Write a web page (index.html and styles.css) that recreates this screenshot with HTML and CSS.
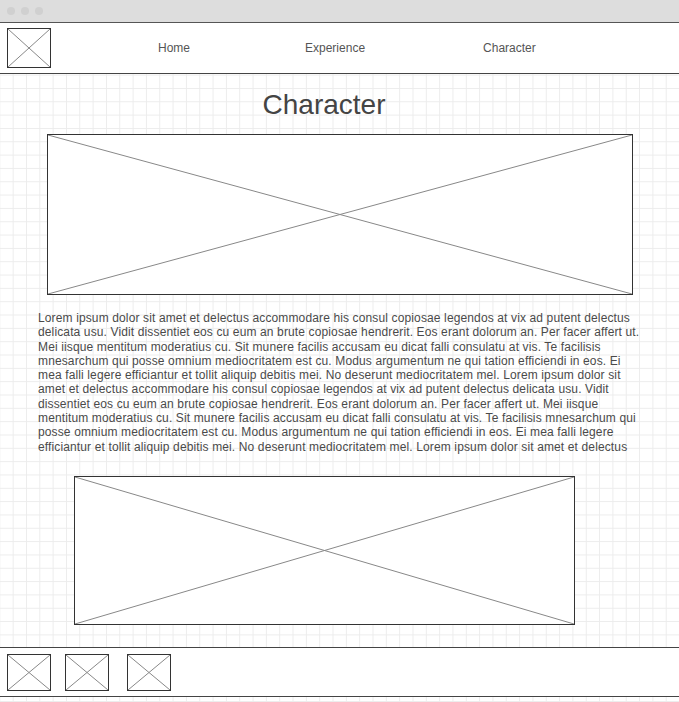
FILE: index.html
```html
<!DOCTYPE html>
<html lang="en">
<head>
    <meta charset="UTF-8">
    <meta name="viewport" content="width=device-width, initial-scale=1.0">
    <title>Character</title>
    <link rel="stylesheet" href="styles.css">
</head>
<body>
    <div class="titlebar">
        <span class="dot"></span>
        <span class="dot"></span>
        <span class="dot"></span>
    </div>

    <nav class="nav">
        <div class="placeholder logo">
            <svg viewBox="0 0 100 100" preserveAspectRatio="none"><line x1="0" y1="0" x2="100" y2="100"/><line x1="100" y1="0" x2="0" y2="100"/></svg>
        </div>
        <ul class="nav-links">
            <li>Home</li>
            <li>Experience</li>
            <li>Character</li>
        </ul>
    </nav>

    <main class="content">
        <h1>Character</h1>

        <div class="placeholder hero">
            <svg viewBox="0 0 100 100" preserveAspectRatio="none"><line x1="0" y1="0" x2="100" y2="100"/><line x1="100" y1="0" x2="0" y2="100"/></svg>
        </div>

        <p class="body-text">Lorem ipsum dolor sit amet et delectus accommodare his consul copiosae legendos at vix ad putent delectus delicata usu. Vidit dissentiet eos cu eum an brute copiosae hendrerit. Eos erant dolorum an. Per facer affert ut. Mei iisque mentitum moderatius cu. Sit munere facilis accusam eu dicat falli consulatu at vis. Te facilisis mnesarchum qui posse omnium mediocritatem est cu. Modus argumentum ne qui tation efficiendi in eos. Ei mea falli legere efficiantur et tollit aliquip debitis mei. No deserunt mediocritatem mel. Lorem ipsum dolor sit amet et delectus accommodare his consul copiosae legendos at vix ad putent delectus delicata usu. Vidit dissentiet eos cu eum an brute copiosae hendrerit. Eos erant dolorum an. Per facer affert ut. Mei iisque mentitum moderatius cu. Sit munere facilis accusam eu dicat falli consulatu at vis. Te facilisis mnesarchum qui posse omnium mediocritatem est cu. Modus argumentum ne qui tation efficiendi in eos. Ei mea falli legere efficiantur et tollit aliquip debitis mei. No deserunt mediocritatem mel. Lorem ipsum dolor sit amet et delectus</p>

        <div class="placeholder second">
            <svg viewBox="0 0 100 100" preserveAspectRatio="none"><line x1="0" y1="0" x2="100" y2="100"/><line x1="100" y1="0" x2="0" y2="100"/></svg>
        </div>
    </main>

    <footer class="footer">
        <div class="placeholder thumb">
            <svg viewBox="0 0 100 100" preserveAspectRatio="none"><line x1="0" y1="0" x2="100" y2="100"/><line x1="100" y1="0" x2="0" y2="100"/></svg>
        </div>
        <div class="placeholder thumb">
            <svg viewBox="0 0 100 100" preserveAspectRatio="none"><line x1="0" y1="0" x2="100" y2="100"/><line x1="100" y1="0" x2="0" y2="100"/></svg>
        </div>
        <div class="placeholder thumb last">
            <svg viewBox="0 0 100 100" preserveAspectRatio="none"><line x1="0" y1="0" x2="100" y2="100"/><line x1="100" y1="0" x2="0" y2="100"/></svg>
        </div>
    </footer>
</body>
</html>
```

FILE: styles.css
```css
body {
    margin: 0;
    font-family: "Liberation Sans", Arial, sans-serif;
    color: #444;
    background-color: white;
    background-image:
        linear-gradient(to right, #ececec 1px, transparent 1px),
        linear-gradient(to bottom, #ececec 1px, transparent 1px);
    background-size: 13.333px 13.333px;
    background-position: 12.67px 8px;
}
.titlebar {
    height: 22px;
    background: #dddddd;
    border-bottom: 1px solid #555;
    display: flex;
    align-items: center;
    gap: 6px;
    padding-left: 7px;
}
.dot {
    width: 8px;
    height: 8px;
    border-radius: 50%;
    background: #d0d0d0;
}
.nav {
    height: 50px;
    background: white;
    border-bottom: 1px solid #444;
    display: flex;
    align-items: flex-start;
}
.nav-links {
    display: flex;
    gap: 115px;
    list-style: none;
    margin: 0;
    padding: 0 0 0 107px;
    font-size: 12px;
    line-height: 14px;
    color: #555;
    margin-top: 18px;
}
.nav-links li:last-child {
    margin-left: 3px;
}
.placeholder {
    box-sizing: border-box;
    border: 1px solid #333;
    background: white;
}
.placeholder svg {
    display: block;
    width: 100%;
    height: 100%;
}
.placeholder line {
    stroke: #888;
    stroke-width: 1;
    vector-effect: non-scaling-stroke;
}
.logo {
    width: 44px;
    height: 40px;
    margin: 5px 0 0 7px;
}
.content {
    padding: 14px 0 0;
}
h1 {
    margin: 0;
    font-weight: normal;
    font-size: 28px;
    line-height: 34px;
    text-align: center;
    color: #444;
    padding-right: 31px;
}
.hero {
    width: 586px;
    height: 161px;
    margin: 12px 0 0 47px;
}
.body-text {
    font-size: 12px;
    letter-spacing: 0.13px;
    line-height: 14.3px;
    margin: 16px 0 0 38px;
    width: 604px;
    color: #4a4a4a;
}
.second {
    width: 501px;
    height: 149px;
    margin: 22px 0 0 74px;
}
.footer {
    margin-top: 22px;
    height: 48px;
    background: white;
    border-top: 1px solid #444;
    border-bottom: 1px solid #444;
    display: flex;
    align-items: flex-start;
    gap: 14px;
    padding-left: 7px;
}
.thumb {
    width: 44px;
    height: 37px;
    margin-top: 6px;
}
.thumb.last {
    margin-left: 4px;
}
```
